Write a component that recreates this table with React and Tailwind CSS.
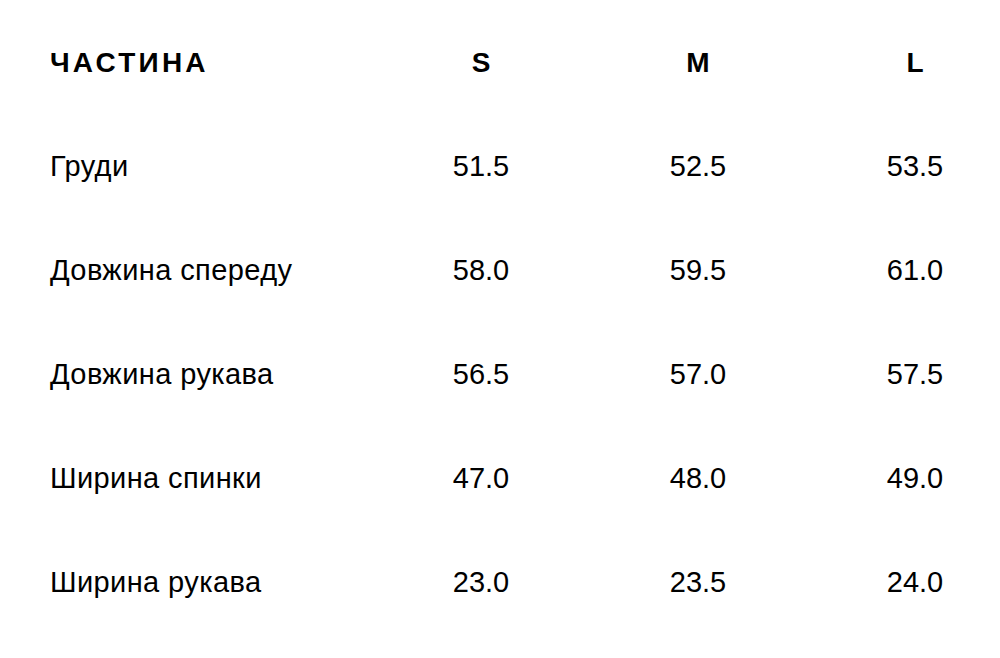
import React from 'react';

const rows = [
  ['Груди', '51.5', '52.5', '53.5'],
  ['Довжина спереду', '58.0', '59.5', '61.0'],
  ['Довжина рукава', '56.5', '57.0', '57.5'],
  ['Ширина спинки', '47.0', '48.0', '49.0'],
  ['Ширина рукава', '23.0', '23.5', '24.0'],
];

const App = () => {
  return (
    <div className="w-[1000px] h-[658px] bg-white text-black font-['Liberation_Sans',Arial,sans-serif] pt-[11px] pl-[50px]">
      <div className="grid grid-cols-[264px_100px_100px_100px] gap-x-[117px] auto-rows-[104px] items-center">
        <div className="text-[28px] font-bold tracking-[3.2px]">ЧАСТИНА</div>
        <div className="text-[28px] font-bold text-center">S</div>
        <div className="text-[28px] font-bold text-center">M</div>
        <div className="text-[28px] font-bold text-center">L</div>
        {rows.map((r) => (
          <React.Fragment key={r[0]}>
            <div className="text-[29px] tracking-[0.4px] whitespace-nowrap">{r[0]}</div>
            <div className="text-[29px] text-center">{r[1]}</div>
            <div className="text-[29px] text-center">{r[2]}</div>
            <div className="text-[29px] text-center">{r[3]}</div>
          </React.Fragment>
        ))}
      </div>
    </div>
  );
};

export default App;
